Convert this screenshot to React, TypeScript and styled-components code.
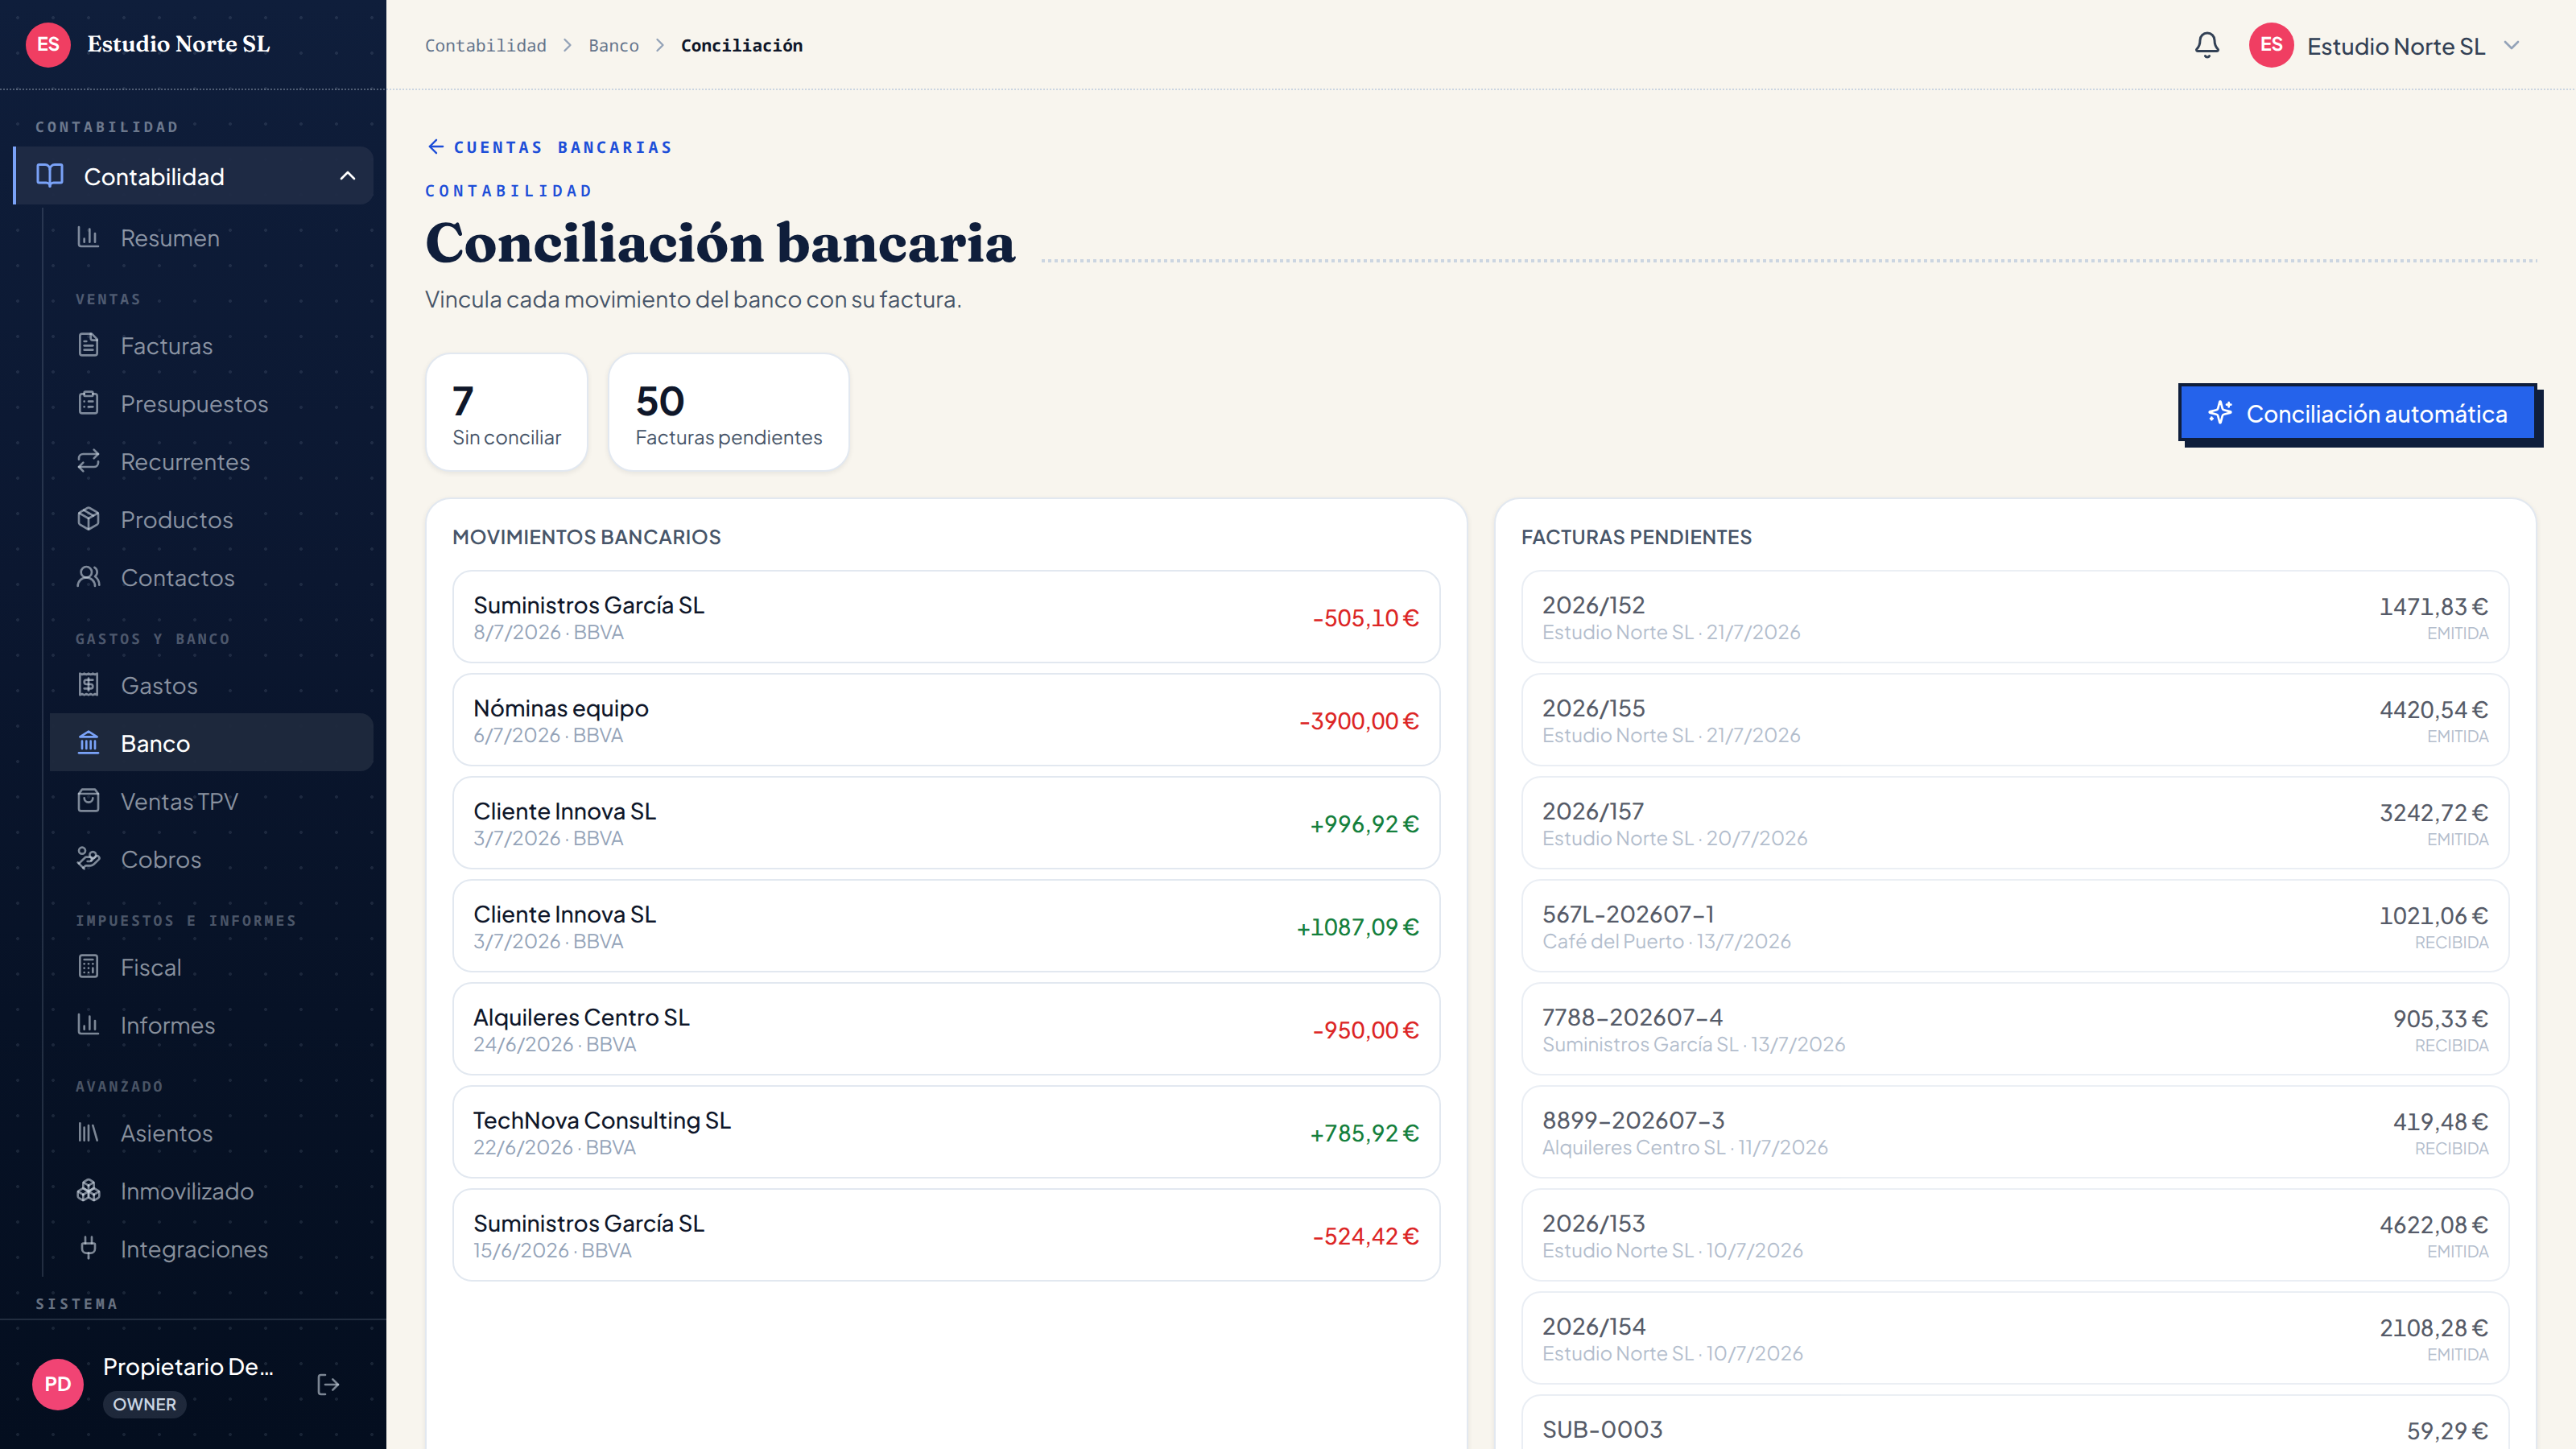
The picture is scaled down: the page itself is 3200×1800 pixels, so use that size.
import React from 'react'
import styled, { createGlobalStyle, css } from "styled-components";
import {
  ArrowLeft, Bell, BookOpen, Boxes, Calculator, ChartColumn, ChevronDown, ChevronRight,
  ChevronUp, ClipboardList, HandCoins, Library, LogOut, Package, Plug, Repeat, UsersRound,
} from 'lucide-react';

const sans = `"Plus Jakarta Sans", Inter, sans-serif`
const serif = `Fraunces, "Liberation Serif", serif`
const mono = `"Noto Sans Mono", "DejaVu Sans Mono", monospace`

const GlobalStyle = createGlobalStyle`
  * {
    box-sizing: border-box;
  }
  body {
    margin: 0;
    background: #f8f5ee;
    color: #0f172a;
    font-family: ${sans};
    font-size: 28px;
    line-height: 40px;
    text-rendering: geometricPrecision;
  }
`;

const dots = (color: string, size: number) => css`
  background-image: repeating-linear-gradient(90deg, ${color} 0 ${size}px, transparent ${size}px ${size * 2}px);
  background-size: 100% ${size}px;
  background-repeat: no-repeat;
  background-position: left bottom;
`

const Shell = styled.div`
  display: flex;
  height: 1800px;
  overflow: hidden;
`

const Sidebar = styled.aside`
  width: 480px;
  flex: none;
  display: flex;
  flex-direction: column;
  color: #fff;
  background-image:
    radial-gradient(circle at center, rgba(148, 163, 184, 0.14) 1.8px, transparent 2.2px),
    linear-gradient(180deg, #0f1e3b 0%, #0b1730 40%, #071226 70%, #040e1f 100%);
  background-size: 44px 44px, 100% 100%;
`

const Brand = styled.div`
  height: 112px;
  flex: none;
  display: flex;
  align-items: center;
  gap: 20px;
  padding-left: 32px;
  ${dots('rgba(203, 213, 225, 0.35)', 2)}
`

const BrandName = styled.span`
  font-family: ${serif};
  font-size: 28px;
  font-weight: 600;
  line-height: 36px;
  letter-spacing: -0.1px;
  padding-bottom: 2px;
`

const Avatar = styled.span<{ $size: number; $color: string }>`
  width: ${p => p.$size}px;
  height: ${p => p.$size}px;
  flex: none;
  display: flex;
  align-items: center;
  justify-content: center;
  padding-bottom: 3px;
  border-radius: 50%;
  background: ${p => p.$color};
  color: #fff;
  font-size: ${p => p.$size > 60 ? 24 : 23}px;
  font-weight: 700;
  letter-spacing: -0.01em;
`

const Nav = styled.nav`
  flex: 1;
  min-height: 0;
  overflow: hidden;
  padding: 33px 16px 0;
`

const SectionLabel = styled.div`
  padding-left: 28px;
  margin-bottom: 11px;
  font: 700 18px/26px ${mono};
  letter-spacing: 4.2px;
  color: rgba(203, 213, 225, 0.5);

  * + & {
    margin-top: 21px;
  }
`

const Label = styled.span`
  padding-top: 3px;
`

const NavParent = styled.a`
  height: 72px;
  display: flex;
  align-items: center;
  gap: 24px;
  padding: 0 16px 0 24px;
  border-left: 4px solid #7aa2f7;
  border-radius: 0 16px 16px 0;
  background: rgba(31, 43, 69, 0.92);
  font-weight: 500;

  svg:first-child {
    color: #7aa2f7;
  }
  svg:last-child {
    margin-left: auto;
  }
`

const SubNav = styled.div`
  margin: 4px 0 0 36px;
  padding-left: 8px;
  border-left: 2px solid rgba(148, 163, 184, 0.2);
`

const GroupLabel = styled.div`
  height: 62px;
  padding: 29px 0 0 32px;
  font: 700 18px/26px ${mono};
  letter-spacing: 3px;
  color: rgba(203, 213, 225, 0.36);
`

const NavItem = styled.a<{ $active?: boolean }>`
  height: 72px;
  display: flex;
  align-items: center;
  gap: 24px;
  padding-left: 32px;
  color: rgba(226, 232, 240, 0.6);

  svg {
    color: rgba(203, 213, 225, 0.6);
  }

  ${p => p.$active && css`
    border-radius: 0 16px 16px 0;
    background: rgba(31, 41, 61, 0.95);
    color: #fff;
    font-weight: 500;
    svg {
      color: #7aa2f7;
    }
  `}
`

const UserBox = styled.div`
  height: 162px;
  flex: none;
  display: flex;
  align-items: center;
  padding: 0 56px 0 40px;
  border-top: 2px solid rgba(148, 163, 184, 0.2);

  svg {
    margin-left: auto;
    color: rgba(203, 213, 225, 0.6);
  }
`

const UserInfo = styled.div`
  display: flex;
  flex-direction: column;
  align-items: flex-start;
  gap: 10px;
  margin-left: 24px;
  font-weight: 500;
`

const Role = styled.span`
  height: 34px;
  padding: 0 12px;
  border-radius: 17px;
  background: rgba(148, 163, 184, 0.18);
  color: #cbd5e1;
  font-size: 20px;
  font-weight: 600;
  line-height: 34px;
  letter-spacing: 0.025em;
`

const Main = styled.main`
  flex: 1;
  min-width: 0;
`

const TopBar = styled.header`
  height: 112px;
  display: flex;
  align-items: center;
  justify-content: space-between;
  padding: 0 64px 0 48px;
  ${dots('#cbd5e1', 2)}
`

const Crumbs = styled.div`
  display: flex;
  align-items: center;
  gap: 12px;
  font: 400 21px/32px ${mono};
  color: #64748b;

  svg {
    color: #94a3b8;
  }
  span, b {
    padding-top: 2px;
  }
  b {
    color: #0f172a;
    font-weight: 700;
  }
`

const Account = styled.div`
  display: flex;
  align-items: center;
  gap: 16px;
  color: #334155;
  font-weight: 500;

  svg:first-child {
    margin-right: 18px;
  }
  svg:last-child {
    color: #94a3b8;
  }
`

const Content = styled.div`
  padding: 48px 48px 0;
`

const BackLink = styled.a`
  height: 44px;
  display: flex;
  align-items: center;
  gap: 8px;
  color: #1d4ed8;
  font: 700 20px/28px ${mono};
  letter-spacing: 4.1px;

  span {
    padding-top: 2px;
  }
`

const Eyebrow = styled.div`
  margin: 18px 0 8px;
  color: #1d4ed8;
  font: 600 20px/30px ${mono};
  letter-spacing: 0.28em;
`

const TitleRow = styled.div`
  display: flex;
  align-items: stretch;
  gap: 32px;
  height: 80px;
`

const Title = styled.h1`
  margin: 0;
  font-family: ${serif};
  font-size: 68px;
  font-weight: 700;
  line-height: 83px;
  letter-spacing: -0.4px;
  color: #0f1e3b;
  white-space: nowrap;
`

const Rule = styled.div`
  flex: 1;
  margin-bottom: 14px;
  ${dots('#cbd5e1', 4)}
`

const Subtitle = styled.p`
  margin: 10px 0 44px;
  color: #475569;
  line-height: 44px;
`

const StatsRow = styled.div`
  display: flex;
  align-items: center;
  gap: 24px;
  margin-bottom: 32px;
`

const card = css`
  border: 2px solid #e2e8f0;
  border-radius: 32px;
  background: #fff;
  box-shadow: 0 2px 6px rgba(15, 23, 42, 0.08);
`

const Stat = styled.div`
  ${card}
  height: 148px;
  padding: 24px 32px;
  color: #475569;
  font-size: 24px;
  line-height: 30px;

  strong {
    display: block;
    margin-bottom: -2px;
    color: #0f172a;
    font-size: 48px;
    line-height: 66px;
    letter-spacing: -0.025em;
  }
`

const AutoButton = styled.button`
  width: 446px;
  height: 72px;
  display: flex;
  align-items: center;
  justify-content: center;
  gap: 16px;
  margin-left: auto;
  padding: 0;
  border: 4px solid #0f1e3b;
  background: #2563eb;
  box-shadow: 8px 8px 0 #0f1e3b;
  color: #fff;
  font: 500 28px/40px ${sans};
`

const Columns = styled.div`
  display: grid;
  grid-template-columns: 1fr 1fr;
  gap: 32px;
`

const Panel = styled.section`
  ${card}
  display: flex;
  flex-direction: column;
  gap: 12px;
  padding: 32px;
`

const PanelTitle = styled.h2`
  margin: 0 0 14px;
  color: #475569;
  font-size: 24px;
  font-weight: 600;
  line-height: 30px;
  letter-spacing: 0.025em;
`

const Row = styled.div<{ $muted?: boolean }>`
  height: 116px;
  display: flex;
  align-items: center;
  justify-content: space-between;
  padding: 0 24px;
  border: 2px solid #e2e8f0;
  border-radius: 24px;
  opacity: ${p => p.$muted ? 0.7 : 1};
`

const RowText = styled.div`
  padding-top: 2px;
  font-weight: 500;
  line-height: 42px;

  small {
    display: block;
    padding-bottom: 6px;
    color: #94a3b8;
    font-size: 24px;
    font-weight: 400;
    line-height: 24px;
  }
`

const Amount = styled.div<{ $color?: string }>`
  padding-top: ${p => p.$color ? 3 : 2}px;
  text-align: right;
  font-weight: 500;
  line-height: 42px;
  font-variant-numeric: tabular-nums;
  color: ${p => p.$color || 'inherit'};

  small {
    display: block;
    padding-bottom: 2px;
    color: #94a3b8;
    font-size: 20px;
    font-weight: 400;
    line-height: 24px;
  }
`

const Glyph: React.FC<{ children: React.ReactNode }> = ({ children }) => (
  <svg width={32} height={32} viewBox="0 0 24 24" fill="none" stroke="currentColor"
    strokeWidth={2} strokeLinecap="round" strokeLinejoin="round">
    {children}
  </svg>
)

const FileText = () => (
  <Glyph>
    <path d="M15 2H6a2 2 0 0 0-2 2v16a2 2 0 0 0 2 2h12a2 2 0 0 0 2-2V7Z" />
    <path d="M14 2v4a2 2 0 0 0 2 2h4" />
    <path d="M10 9H8" /><path d="M16 13H8" /><path d="M16 17H8" />
  </Glyph>
)

const Receipt = () => (
  <Glyph>
    <path d="M4 2v20l2-1 2 1 2-1 2 1 2-1 2 1 2-1 2 1V2l-2 1-2-1-2 1-2-1-2 1-2-1-2 1Z" />
    <path d="M16 8h-6a2 2 0 1 0 0 4h4a2 2 0 1 1 0 4H8" />
    <path d="M12 17.5v-11" />
  </Glyph>
)

const Landmark = () => (
  <Glyph>
    <path d="M3 22h18" /><path d="M6 18v-7" /><path d="M10 18v-7" />
    <path d="M14 18v-7" /><path d="M18 18v-7" />
    <path d="m12 2 8 5H4z" />
  </Glyph>
)

const ShoppingBag = () => (
  <Glyph>
    <path d="M6 2 3 6v14a2 2 0 0 0 2 2h14a2 2 0 0 0 2-2V6l-3-4Z" />
    <path d="M3 6h18" />
    <path d="M16 10a4 4 0 0 1-8 0" />
  </Glyph>
)

const Sparkles = () => (
  <Glyph>
    <path d="M9.937 15.5A2 2 0 0 0 8.5 14.063l-6.135-1.582a.5.5 0 0 1 0-.962L8.5 9.936A2 2 0 0 0 9.937 8.5l1.582-6.135a.5.5 0 0 1 .963 0L14.063 8.5A2 2 0 0 0 15.5 9.937l6.135 1.581a.5.5 0 0 1 0 .964L15.5 14.063a2 2 0 0 0-1.437 1.437l-1.582 6.135a.5.5 0 0 1-.963 0z" />
    <path d="M20 3v4" /><path d="M22 5h-4" /><path d="M4 17v2" /><path d="M5 18H3" />
  </Glyph>
)

type Item = { label: string; icon: React.ElementType }

const groups: { title?: string; items: Item[] }[] = [
  { items: [{ label: 'Resumen', icon: ChartColumn }] },
  {
    title: 'VENTAS', items: [
      { label: 'Facturas', icon: FileText },
      { label: 'Presupuestos', icon: ClipboardList },
      { label: 'Recurrentes', icon: Repeat },
      { label: 'Productos', icon: Package },
      { label: 'Contactos', icon: UsersRound },
    ]
  },
  {
    title: 'GASTOS Y BANCO', items: [
      { label: 'Gastos', icon: Receipt },
      { label: 'Banco', icon: Landmark },
      { label: 'Ventas TPV', icon: ShoppingBag },
      { label: 'Cobros', icon: HandCoins },
    ]
  },
  {
    title: 'IMPUESTOS E INFORMES', items: [
      { label: 'Fiscal', icon: Calculator },
      { label: 'Informes', icon: ChartColumn },
    ]
  },
  {
    title: 'AVANZADO', items: [
      { label: 'Asientos', icon: Library },
      { label: 'Inmovilizado', icon: Boxes },
      { label: 'Integraciones', icon: Plug },
    ]
  },
]

const movements = [
  { name: 'Suministros García SL', date: '8/7/2026', amount: '-505,10 €' },
  { name: 'Nóminas equipo', date: '6/7/2026', amount: '-3900,00 €' },
  { name: 'Cliente Innova SL', date: '3/7/2026', amount: '+996,92 €' },
  { name: 'Cliente Innova SL', date: '3/7/2026', amount: '+1087,09 €' },
  { name: 'Alquileres Centro SL', date: '24/6/2026', amount: '-950,00 €' },
  { name: 'TechNova Consulting SL', date: '22/6/2026', amount: '+785,92 €' },
  { name: 'Suministros García SL', date: '15/6/2026', amount: '-524,42 €' },
]

const invoices = [
  { num: '2026/152', who: 'Estudio Norte SL · 21/7/2026', amount: '1471,83 €', status: 'EMITIDA' },
  { num: '2026/155', who: 'Estudio Norte SL · 21/7/2026', amount: '4420,54 €', status: 'EMITIDA' },
  { num: '2026/157', who: 'Estudio Norte SL · 20/7/2026', amount: '3242,72 €', status: 'EMITIDA' },
  { num: '567L-202607-1', who: 'Café del Puerto · 13/7/2026', amount: '1021,06 €', status: 'RECIBIDA' },
  { num: '7788-202607-4', who: 'Suministros García SL · 13/7/2026', amount: '905,33 €', status: 'RECIBIDA' },
  { num: '8899-202607-3', who: 'Alquileres Centro SL · 11/7/2026', amount: '419,48 €', status: 'RECIBIDA' },
  { num: '2026/153', who: 'Estudio Norte SL · 10/7/2026', amount: '4622,08 €', status: 'EMITIDA' },
  { num: '2026/154', who: 'Estudio Norte SL · 10/7/2026', amount: '2108,28 €', status: 'EMITIDA' },
  { num: 'SUB-0003', who: '', amount: '59,29 €', status: '' },
]

const App: React.FC = () => {
  return (
    <Shell>
      <GlobalStyle />
      <Sidebar>
        <Brand>
          <Avatar $size={56} $color="#f03e62">ES</Avatar>
          <BrandName>Estudio Norte SL</BrandName>
        </Brand>
        <Nav>
          <SectionLabel>CONTABILIDAD</SectionLabel>
          <NavParent>
            <BookOpen size={36} />
            <Label>Contabilidad</Label>
            <ChevronUp size={32} />
          </NavParent>
          <SubNav>
            {groups.map((group, i) => (
              <React.Fragment key={i}>
                {group.title && <GroupLabel>{group.title}</GroupLabel>}
                {group.items.map(({ label, icon: Icon }) => (
                  <NavItem key={label} $active={label === 'Banco'}>
                    <Icon size={32} />
                    <Label>{label}</Label>
                  </NavItem>
                ))}
              </React.Fragment>
            ))}
          </SubNav>
          <SectionLabel>SISTEMA</SectionLabel>
        </Nav>
        <UserBox>
          <Avatar $size={64} $color="#f14474">PD</Avatar>
          <UserInfo>
            <span>Propietario De…</span>
            <Role>OWNER</Role>
          </UserInfo>
          <LogOut size={32} />
        </UserBox>
      </Sidebar>

      <Main>
        <TopBar>
          <Crumbs>
            <span>Contabilidad</span>
            <ChevronRight size={28} />
            <span>Banco</span>
            <ChevronRight size={28} />
            <b>Conciliación</b>
          </Crumbs>
          <Account>
            <Bell size={36} />
            <Avatar $size={56} $color="#f03e62">ES</Avatar>
            <Label>Estudio Norte SL</Label>
            <ChevronDown size={32} />
          </Account>
        </TopBar>

        <Content>
          <BackLink>
            <ArrowLeft size={28} />
            <span>CUENTAS BANCARIAS</span>
          </BackLink>
          <Eyebrow>CONTABILIDAD</Eyebrow>
          <TitleRow>
            <Title>Conciliación bancaria</Title>
            <Rule />
          </TitleRow>
          <Subtitle>Vincula cada movimiento del banco con su factura.</Subtitle>

          <StatsRow>
            <Stat><strong>7</strong>Sin conciliar</Stat>
            <Stat><strong>50</strong>Facturas pendientes</Stat>
            <AutoButton>
              <Sparkles />
              <Label>Conciliación automática</Label>
            </AutoButton>
          </StatsRow>

          <Columns>
            <Panel>
              <PanelTitle>MOVIMIENTOS BANCARIOS</PanelTitle>
              {movements.map((m, i) => (
                <Row key={i}>
                  <RowText>{m.name}<small>{m.date} · BBVA</small></RowText>
                  <Amount $color={m.amount[0] === '-' ? '#dc2626' : '#15803d'}>{m.amount}</Amount>
                </Row>
              ))}
            </Panel>
            <Panel>
              <PanelTitle>FACTURAS PENDIENTES</PanelTitle>
              {invoices.map(inv => (
                <Row key={inv.num} $muted>
                  <RowText>{inv.num}<small>{inv.who || '\u00a0'}</small></RowText>
                  <Amount>{inv.amount}<small>{inv.status || '\u00a0'}</small></Amount>
                </Row>
              ))}
            </Panel>
          </Columns>
        </Content>
      </Main>
    </Shell>
  )
}

export default App;
